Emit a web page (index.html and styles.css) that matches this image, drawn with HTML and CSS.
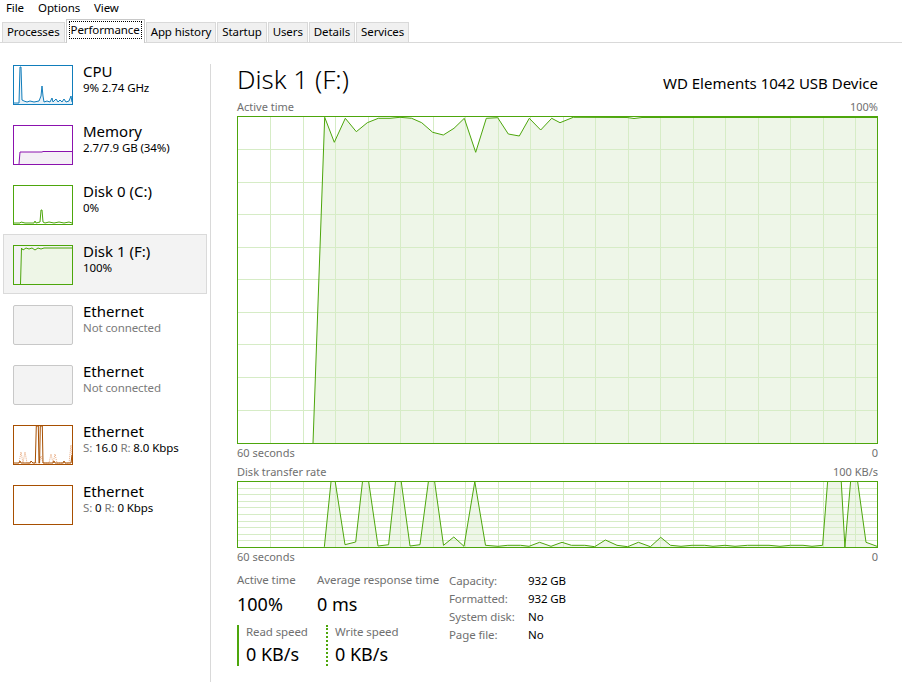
FILE: index.html
```html
<!DOCTYPE html>
<html lang="en">
<head>
    <meta charset="UTF-8">
    <title>Task Manager</title>
    <link rel="stylesheet" href="styles.css">
</head>
<body>
<div class="menubar">
    <span>File</span>
    <span>Options</span>
    <span>View</span>
</div>
<div class="tabs">
    <div class="tab">Processes</div>
    <div class="tab active"><span class="focus">Performance</span></div>
    <div class="tab">App history</div>
    <div class="tab">Startup</div>
    <div class="tab">Users</div>
    <div class="tab">Details</div>
    <div class="tab">Services</div>
</div>
<div class="main">
    <ul class="sidebar">
        <li class="item">
            <svg class="thumb cpu" width="60" height="40" viewBox="0 0 60 40">
                <polygon class="fill" points="1,39 6,38 7,2 8,2 9,35 11,36 14,37 17,36 21,37 26,36 28,31 29,21 30,31 31,37 34,36 37,37 39,33 40,37 43,34 45,37 47,35 49,37 51,34 53,37 56,36 58,31 59,37 59,39"/>
                <polyline points="1,38 6,38 7,2 8,2 9,35 11,36 14,37 17,36 21,37 26,36 28,31 29,21 30,31 31,37 34,36 37,37 39,33 40,37 43,34 45,37 47,35 49,37 51,34 53,37 56,36 58,31 59,37"/>
                <rect x="0.5" y="0.5" width="59" height="39"/>
            </svg>
            <div class="info">
                <div class="name">CPU</div>
                <div class="sub">9% 2.74 GHz</div>
            </div>
        </li>
        <li class="item">
            <svg class="thumb mem" width="60" height="40" viewBox="0 0 60 40">
                <polygon class="fill" points="6,39 7,27 29,27 30,26.5 59,26.5 59,39"/>
                <polyline points="6,39 7,27 29,27 30,26.5 59,26.5"/>
                <rect x="0.5" y="0.5" width="59" height="39"/>
            </svg>
            <div class="info">
                <div class="name">Memory</div>
                <div class="sub">2.7/7.9 GB (34%)</div>
            </div>
        </li>
        <li class="item">
            <svg class="thumb disk" width="60" height="40" viewBox="0 0 60 40">
                <polyline points="1,38 7,38 8,37 12,38 21,38 22,36 23,38 27,37 28,25 29,25 30,37 32,38 36,37 41,38 46,37 51,38 56,37 59,38"/>
                <rect x="0.5" y="0.5" width="59" height="39"/>
            </svg>
            <div class="info">
                <div class="name">Disk 0 (C:)</div>
                <div class="sub">0%</div>
            </div>
        </li>
        <li class="item selected">
            <svg class="thumb disk" width="60" height="40" viewBox="0 0 60 40">
                <polygon class="fill" points="7.5,39 8.5,3 10,5 13,3 16,4 19,3 22,5 25,3 28,4 31,3 34,3 59,3 59,39"/>
                <polyline points="7.5,39 8.5,3 10,5 13,3 16,4 19,3 22,5 25,3 28,4 31,3 34,3 59,3"/>
                <rect x="0.5" y="0.5" width="59" height="39"/>
            </svg>
            <div class="info">
                <div class="name">Disk 1 (F:)</div>
                <div class="sub">100%</div>
            </div>
        </li>
        <li class="item">
            <div class="thumb off"></div>
            <div class="info">
                <div class="name">Ethernet</div>
                <div class="sub dim">Not connected</div>
            </div>
        </li>
        <li class="item">
            <div class="thumb off"></div>
            <div class="info">
                <div class="name">Ethernet</div>
                <div class="sub dim">Not connected</div>
            </div>
        </li>
        <li class="item">
            <svg class="thumb eth" width="60" height="40" viewBox="0 0 60 40">
                <polyline class="recv" points="6,38 8,27 10,38 12,27 14,38 26,38 28,31 30,38 36,38 38,29 40,38 42,29 44,38 56,38 58,20 59,38"/>
                <polyline points="1,38 6,38 7,36 8,38 17,38 18,36 20,38 22.3,38 23.3,1 25.3,1 26,38 26.6,38 27.3,1 29.3,1 30,38 40,38 41,36 42,38 50,38 51,36 52,38 58,38 59,30"/>
                <rect x="0.5" y="0.5" width="59" height="39"/>
            </svg>
            <div class="info">
                <div class="name">Ethernet</div>
                <div class="sub"><span class="dim">S:</span> 16.0 <span class="dim">R:</span> 8.0 Kbps</div>
            </div>
        </li>
        <li class="item">
            <svg class="thumb eth" width="60" height="40" viewBox="0 0 60 40">
                <rect x="0.5" y="0.5" width="59" height="39"/>
            </svg>
            <div class="info">
                <div class="name">Ethernet</div>
                <div class="sub"><span class="dim">S:</span> 0 <span class="dim">R:</span> 0 Kbps</div>
            </div>
        </li>
    </ul>
    <div class="divider"></div>
    <div class="content">
        <div class="head">
            <h1>Disk 1 (F:)</h1>
            <div class="device">WD Elements 1042 USB Device</div>
        </div>
        <div class="axis top">
            <span>Active time</span>
            <span>100%</span>
        </div>
        <svg class="graph" width="641" height="328" viewBox="0 0 641 328">
            <polygon class="fill" points="76,327 87.7,1.3 97.3,26.3 108.3,2.3 119.3,15.7 130.3,6.7 141.3,2.3 153,2.3 163,1.3 174.7,2.3 184.7,6.7 195.7,16.3 206.3,19 217,12.3 227.3,2.3 238.7,36.3 249.3,2.3 260.7,1.7 271.3,18 282.3,20 292.3,2.3 303.7,14 314.7,2.3 323,6.7 336.3,1.3 390,1.5 397,2.5 405,1.5 640,1.5 640,327"/>
            <path class="grid" d="M33.5 1V327M66 1V327M98.5 1V327M131 1V327M163.5 1V327M196 1V327M228.5 1V327M261 1V327M293.5 1V327M326 1V327M358.5 1V327M391 1V327M423.5 1V327M456 1V327M488.5 1V327M521 1V327M553.5 1V327M586 1V327M618.5 1V327M1 33.5H640M1 66H640M1 98.5H640M1 131H640M1 163.5H640M1 196H640M1 228.5H640M1 261H640M1 294H640"/>
            <polyline class="line" points="76,327 87.7,1.3 97.3,26.3 108.3,2.3 119.3,15.7 130.3,6.7 141.3,2.3 153,2.3 163,1.3 174.7,2.3 184.7,6.7 195.7,16.3 206.3,19 217,12.3 227.3,2.3 238.7,36.3 249.3,2.3 260.7,1.7 271.3,18 282.3,20 292.3,2.3 303.7,14 314.7,2.3 323,6.7 336.3,1.3 390,1.5 397,2.5 405,1.5 640,1.5"/>
            <rect class="frame" x="0.5" y="0.5" width="640" height="327"/>
        </svg>
        <div class="axis below">
            <span>60 seconds</span>
            <span>0</span>
        </div>
        <div class="axis second">
            <span>Disk transfer rate</span>
            <span>100 KB/s</span>
        </div>
        <svg class="graph" width="641" height="67" viewBox="0 0 641 67">
            <defs>
                <clipPath id="rate-clip"><rect x="0" y="0" width="641" height="67"/></clipPath>
            </defs>
            <g clip-path="url(#rate-clip)">
                <polygon class="fill" points="87,66 87.4,65.5 94.5,-4 97.5,-4 108,63.7 118.7,61 126,-4 131,-4 141,65 151.6,63.7 159,-4 163.6,-4 173,65 183,63.7 192,-4 197,-4 206.5,64.3 216.8,56 227,65.3 237.8,0.5 248.5,64.3 261,65.3 270.8,64.3 283.6,64.3 292,65.3 302.6,61.3 314,65.3 325,61.3 334.4,64.3 347.8,64.3 357.7,65.7 368.4,59 380,64.3 390.7,65.7 401.4,61.3 413.4,65.7 423.7,56.3 433.5,64.3 444,65.3 455,64.3 467.8,64.3 476,65.3 488,64.3 498,65.3 510.6,64.3 532,64.3 543,65.3 553.5,64.3 566,64.3 575,65.3 585.6,64.3 591,-4 604,-4 607.9,66 614,-4 620,-4 629,61.3 640,65.3 640,66"/>
                <path class="grid" d="M33.5 1V66M66 1V66M98.5 1V66M131 1V66M163.5 1V66M196 1V66M228.5 1V66M261 1V66M293.5 1V66M326 1V66M358.5 1V66M391 1V66M423.5 1V66M456 1V66M488.5 1V66M521 1V66M553.5 1V66M586 1V66M618.5 1V66M1 7H640M1 13.5H640M1 20H640M1 26.5H640M1 33.5H640M1 40H640M1 46.5H640M1 53H640M1 59.5H640"/>
                <polyline class="line" points="87,66 87.4,65.5 94.5,-4 97.5,-4 108,63.7 118.7,61 126,-4 131,-4 141,65 151.6,63.7 159,-4 163.6,-4 173,65 183,63.7 192,-4 197,-4 206.5,64.3 216.8,56 227,65.3 237.8,0.5 248.5,64.3 261,65.3 270.8,64.3 283.6,64.3 292,65.3 302.6,61.3 314,65.3 325,61.3 334.4,64.3 347.8,64.3 357.7,65.7 368.4,59 380,64.3 390.7,65.7 401.4,61.3 413.4,65.7 423.7,56.3 433.5,64.3 444,65.3 455,64.3 467.8,64.3 476,65.3 488,64.3 498,65.3 510.6,64.3 532,64.3 543,65.3 553.5,64.3 566,64.3 575,65.3 585.6,64.3 591,-4 604,-4 607.9,66 614,-4 620,-4 629,61.3 640,65.3"/>
            </g>
            <rect class="frame" x="0.5" y="0.5" width="640" height="66"/>
        </svg>
        <div class="axis below">
            <span>60 seconds</span>
            <span>0</span>
        </div>
        <div class="stats">
            <div class="stats-left">
                <div class="stat-row">
                    <div class="stat first">
                        <div class="label">Active time</div>
                        <div class="value">100%</div>
                    </div>
                    <div class="stat">
                        <div class="label">Average response time</div>
                        <div class="value">0 ms</div>
                    </div>
                </div>
                <div class="stat-row">
                    <div class="speed read">
                        <div class="label">Read speed</div>
                        <div class="value">0 KB/s</div>
                    </div>
                    <div class="speed write">
                        <div class="label">Write speed</div>
                        <div class="value">0 KB/s</div>
                    </div>
                </div>
            </div>
            <dl class="props">
                <dt>Capacity:</dt><dd>932 GB</dd>
                <dt>Formatted:</dt><dd>932 GB</dd>
                <dt>System disk:</dt><dd>No</dd>
                <dt>Page file:</dt><dd>No</dd>
            </dl>
        </div>
    </div>
</div>
</body>
</html>
```

FILE: styles.css
```css
* {
    margin: 0;
    padding: 0;
    box-sizing: border-box;
    list-style: none;
}

body {
    width: 902px;
    height: 687px;
    overflow: hidden;
    background: #fff;
    color: #000;
    font-family: "Noto Sans", "Open Sans", sans-serif;
    font-size: 11.5px;
    letter-spacing: -0.1px;
}

/* menu + tabs */
.menubar {
    display: flex;
    gap: 14px;
    height: 17px;
    padding-left: 6px;
    line-height: 16px;
}

.tabs {
    display: flex;
    align-items: flex-end;
    gap: 1px;
    height: 26px;
    padding-left: 2px;
    border-bottom: 1px solid #d9d9d9;
}

.tab {
    height: 20px;
    padding: 0 4px;
    border: 1px solid #d9d9d9;
    border-bottom: none;
    background: #f0f0f0;
    line-height: 17px;
    white-space: nowrap;
}

.tab.active {
    height: 24px;
    margin-bottom: -1px;
    padding: 1px 3px 0;
    border-color: #c8c8c8;
    background: #fff;
}

.tab .focus {
    display: inline-block;
    padding: 0 1px;
    outline: 1px dotted #000;
    line-height: 16px;
}

/* layout */
.main {
    display: flex;
    height: 644px;
}

.sidebar {
    width: 210px;
    padding: 11px 0 0 3px;
}

.item {
    display: flex;
    gap: 10px;
    width: 204px;
    height: 60px;
    padding: 7px 9px 0;
    border: 1px solid transparent;
}

.item.selected {
    background: #f3f3f3;
    border-color: #dadada;
}

.thumb {
    flex: none;
    width: 60px;
    height: 40px;
    margin-top: 3px;
    fill: none;
    stroke-width: 1;
}

.thumb rect {
    fill: none;
}

.thumb.cpu { stroke: #117dbb; }
.thumb.cpu .fill { fill: #e7f1f8; stroke: none; }
.thumb.mem { stroke: #8b12ae; }
.thumb.mem .fill { fill: #f4eff6; stroke: none; }
.thumb.disk { stroke: #4da60c; }
.thumb.disk .fill { fill: #eef6e7; stroke: none; }
.thumb.eth { stroke: #a74f01; }
.thumb.eth .recv { stroke: #e8a77a; stroke-dasharray: 1 1; }

.thumb.off {
    background: #f3f3f3;
    border: 1px solid #c8c8c8;
    border-radius: 2px;
}

.name {
    font-size: 15px;
    letter-spacing: 0;
    line-height: 18px;
}

.sub {
    line-height: 15px;
}

.dim {
    color: #7a7a7a;
}

.divider {
    width: 1px;
    margin: 21px 0 5px;
    background: #d9d9d9;
}

.content {
    width: 667px;
    padding-left: 26px;
}

.head {
    display: flex;
    justify-content: space-between;
    align-items: baseline;
    width: 641px;
    margin-top: 20px;
    letter-spacing: 0;
}

h1 {
    font-size: 26px;
    font-weight: 300;
    line-height: 32px;
}

.device {
    font-size: 15px;
}

.axis {
    display: flex;
    justify-content: space-between;
    width: 641px;
    color: #707070;
    font-size: 11px;
    letter-spacing: 0;
    line-height: 14px;
}

.axis.top {
    margin: 5px 0 2px;
}

.axis.below {
    padding-top: 2px;
}

.axis.second {
    margin: 5px 0 2px;
}

.graph {
    display: block;
}

.graph .fill {
    fill: #eef6e8;
}

.graph .grid {
    fill: none;
    stroke: #d6ecc6;
    stroke-width: 1;
    shape-rendering: crispEdges;
}

.graph .line {
    fill: none;
    stroke: #4da60c;
    stroke-width: 1;
}

.graph .frame {
    fill: none;
    stroke: #4da60c;
    stroke-width: 1;
}

/* stats */
.stats {
    display: flex;
    align-items: flex-start;
    margin-top: 8px;
}

.stats-left {
    width: 212px;
}

.stat-row {
    display: flex;
}

.stat.first {
    width: 80px;
}

.label {
    color: #707070;
    line-height: 16px;
}

.value {
    margin-top: 5px;
    font-size: 18px;
    letter-spacing: 0;
    line-height: 22px;
}

.speed {
    margin-top: 10px;
    padding-left: 7px;
}

.speed .label {
    line-height: 13px;
}

.speed .value {
    margin-top: 4px;
    line-height: 24px;
}

.speed.read {
    width: 89px;
    border-left: 2px solid #4da60c;
}

.speed.write {
    border-left: 2px dotted #4da60c;
}

.props {
    display: grid;
    grid-template-columns: 79px auto;
    line-height: 18px;
}

.props dt {
    color: #707070;
}
```
